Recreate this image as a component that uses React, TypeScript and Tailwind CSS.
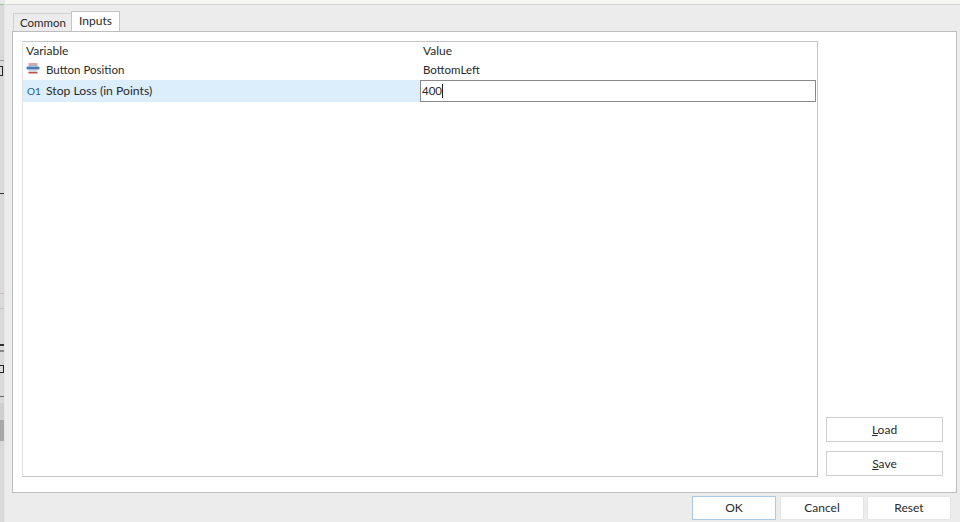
import React from "react";

const font = { fontFamily: '"Lato", "Noto Sans", sans-serif' };

function EnumIcon() {
  return (
    <svg width="14" height="14" viewBox="0 0 14 14" className="shrink-0">
      <rect x="2.5" y="0.5" width="9" height="1" fill="#c0504d" />
      <rect x="2.5" y="2" width="9" height="1" fill="#9db2cc" />
      <rect x="0.5" y="3.5" width="13" height="3" rx="1.2" fill="#4a7ab0" />
      <rect x="2.5" y="7.5" width="9" height="1" fill="#9db2cc" />
      <rect x="2.5" y="9" width="9" height="1.5" fill="#c0504d" />
    </svg>
  );
}

function TabButton({ label, active }: { label: string; active?: boolean }) {
  return active ? (
    <div className="z-10 -mb-px flex h-[21px] w-[49px] items-start justify-center border border-b-0 border-[#c4c4c4] bg-white text-[12px] text-[#2a2a2a]">
      {label}
    </div>
  ) : (
    <div className="mt-[3px] flex h-[18px] w-[59px] items-center justify-center border border-r-0 border-b-0 border-[#d0d0d0] bg-[#ececec] text-[11.5px] text-[#2a2a2a]">
      {label}
    </div>
  );
}

function ActionButton({ children, className }: { children: React.ReactNode; className: string }) {
  return (
    <div className={`flex items-center justify-center border text-[12px] text-[#2a2a2a] ${className}`}>
      {children}
    </div>
  );
}

// Edge of the chart window that stays visible left of the dialog.
function ChartSliver() {
  return (
    <div className="flex w-[5px] shrink-0 flex-col border-r border-[#e6e6e6] bg-[#d9d9d9]">
      <div className="h-[4px] bg-[#e8e8e8]" />
      <div className="h-[1px] bg-[#9bc29b]" />
      <div className="h-[55px]" />
      <div className="h-[1px] bg-[#9a9a9a]" />
      <div className="h-[5px]" />
      <div className="h-[10px] w-[3px] border-y border-r border-[#222]" />
      <div className="h-[117px]" />
      <div className="h-[1px] bg-[#333]" />
      <div className="h-[99px]" />
      <div className="h-[1px] bg-[#cdb8b8]" />
      <div className="h-[14px]" />
      <div className="h-[1px] bg-[#b5c9b5]" />
      <div className="h-[35px]" />
      <div className="h-[2px] bg-[#333]" />
      <div className="h-[4px]" />
      <div className="h-[2px] bg-[#888]" />
      <div className="h-[13px]" />
      <div className="h-[8px] w-[4px] border-y border-r border-[#222]" />
      <div className="h-[23px]" />
      <div className="h-[1px] bg-[#666]" />
      <div className="h-[6px]" />
      <div className="h-[17px] bg-[#cfcfcf]" />
      <div className="h-[21px] bg-[#a8a8a8]" />
    </div>
  );
}

export default function App() {
  return (
    <div className="flex h-[522px] w-[960px] overflow-hidden bg-white" style={font}>
      <ChartSliver />

      <div className="flex min-w-0 flex-1 flex-col bg-[#ececec]">
        <div className="h-[4px] shrink-0 bg-[#f6f6f3]" />
        <div className="h-[1px] shrink-0 bg-[#d6d6d6]" />

        {/* tab strip */}
        <div className="flex h-[26px] shrink-0 items-end pl-[8px]">
          <TabButton label="Common" />
          <div className="-ml-px">
            <TabButton label="Inputs" active />
          </div>
        </div>

        {/* tab page */}
        <div className="mr-[3px] ml-[7px] flex h-[462px] shrink-0 gap-[8px] border border-[#bdbdbd] bg-white pt-[9px] pr-[13px] pb-[16px] pl-[9px]">
          <div className="-mb-px flex w-[796px] shrink-0 flex-col border border-[#c4c4c4] border-l-[#e2e2e2] bg-white text-[12px] text-[#2a2a2a]">
            <div className="flex h-[18px] shrink-0 items-center">
              <div className="w-[397px] pl-[3px]">Variable</div>
              <div className="pl-[3px]">Value</div>
            </div>
            <div className="flex h-[20px] shrink-0 items-center text-[11.5px]">
              <div className="flex w-[397px] items-center pl-[3px]">
                <EnumIcon />
                <span className="ml-[6px]">Button Position</span>
              </div>
              <div className="pl-[3px]">BottomLeft</div>
            </div>
            <div className="flex h-[22px] shrink-0 items-stretch">
              <div className="flex w-[397px] items-center bg-[#dcedfb] pl-[4px]">
                <span className="w-[19px] text-[10px] text-[#1d5f8a]">O1</span>
                <span className="text-[12.2px]">Stop Loss (in Points)</span>
              </div>
              <div className="mr-[1px] flex flex-1 items-center border border-[#8a8a8a] bg-white pl-[1px]">
                <span className="text-[11.5px]">400</span>
                <span className="h-[14px] w-[1px] bg-[#222]" />
              </div>
            </div>
          </div>

          <div className="flex flex-1 flex-col justify-end gap-[9px]">
            <ActionButton className="h-[25px] border-[#cfcfcf] bg-white">
              <span><u>L</u>oad</span>
            </ActionButton>
            <ActionButton className="h-[25px] border-[#cfcfcf] bg-white">
              <span><u>S</u>ave</span>
            </ActionButton>
          </div>
        </div>

        {/* dialog buttons */}
        <div className="flex flex-1 items-start justify-end pt-[3px] pr-[9px]">
          <ActionButton className="h-[24px] w-[84px] border-[#a9c9e6] bg-white">OK</ActionButton>
          <ActionButton className="ml-[4px] h-[24px] w-[84px] border-[#e4e4e4] bg-white">Cancel</ActionButton>
          <ActionButton className="ml-[3px] h-[24px] w-[84px] border-[#e4e4e4] bg-white">Reset</ActionButton>
        </div>
      </div>
    </div>
  );
}
